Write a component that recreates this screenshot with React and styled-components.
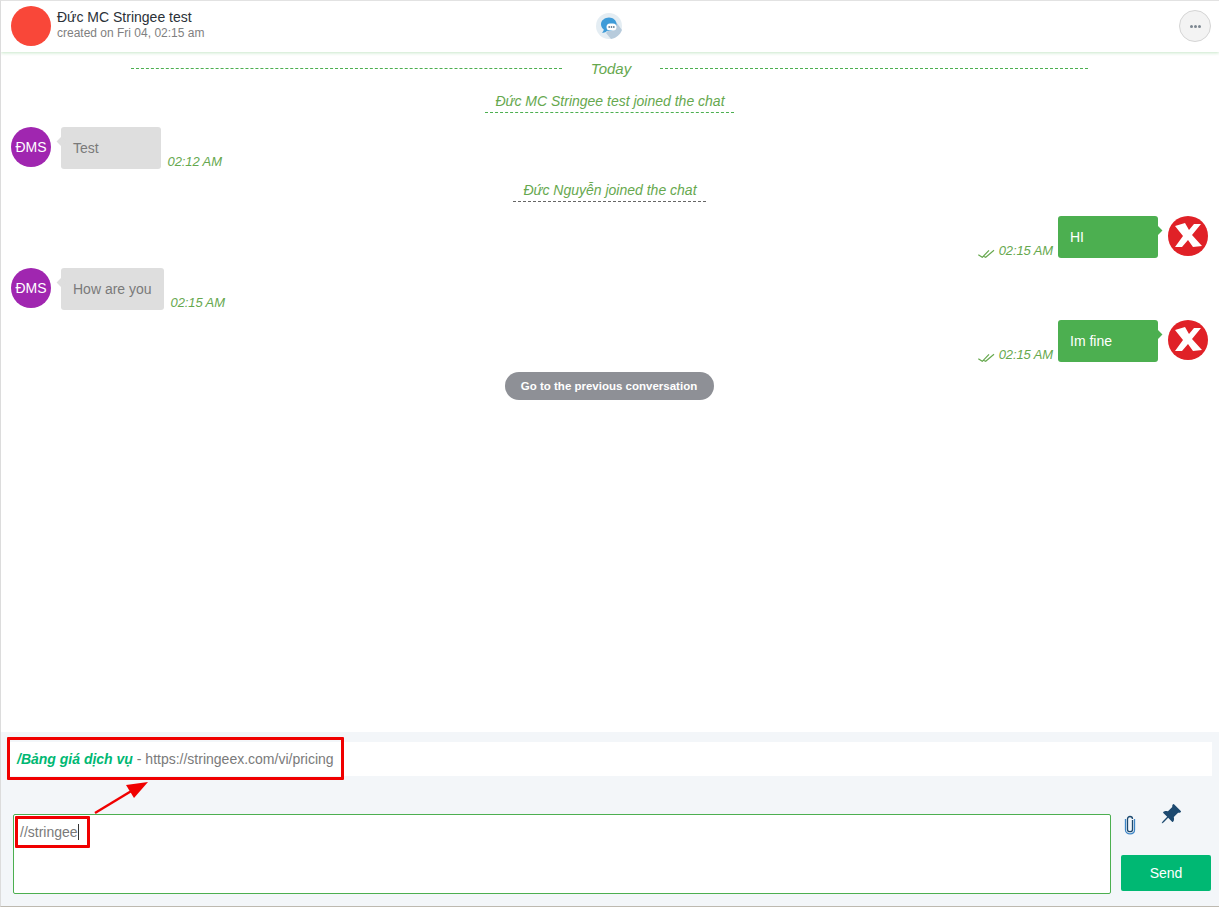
import React from 'react'
import styled, { createGlobalStyle } from 'styled-components'
import { BsPinAngleFill } from 'react-icons/bs'

const GlobalStyle = createGlobalStyle`
  html, body {
    margin: 0;
    padding: 0;
    background: #fff;
    font-family: "Liberation Sans", Arial, sans-serif;
  }
  * { box-sizing: border-box; }
`

const Page = styled.div`
  width: 1219px;
  height: 907px;
  display: flex;
  flex-direction: column;
  border-top: 1px solid #e2e2e2;
  border-left: 1px solid #dcdcdc;
  border-bottom: 1px solid #bdb9b0;
  overflow: hidden;
`

const Header = styled.header`
  height: 51px;
  flex: none;
  display: grid;
  grid-template-columns: 585px 26px 1fr;
  align-items: center;
  padding: 0 8px 1px 10px;
  background: #fff;
  box-shadow: 0 1px 3px rgba(76, 175, 80, 0.3);
  position: relative;
`

const HeaderLeft = styled.div`
  display: flex;
  align-items: center;
  gap: 6px;
`

const RoundAvatar = styled.div`
  width: 40px;
  height: 40px;
  flex: none;
  border-radius: 50%;
  background: ${(p) => p.$bg};
  color: #fff;
  font-size: 14px;
  display: flex;
  align-items: center;
  justify-content: center;
`

const HeaderText = styled.div`
  display: flex;
  flex-direction: column;
  padding-bottom: 3px;
`

const HeaderName = styled.div`
  font-size: 14px;
  line-height: 18px;
  color: #2b3138;
`

const HeaderSub = styled.div`
  font-size: 12px;
  line-height: 15px;
  color: #7f7f7f;
`

const MoreButton = styled.div`
  justify-self: end;
  width: 32px;
  height: 32px;
  border-radius: 50%;
  border: 1px solid #d5d5d5;
  background: #f3f3f3;
  display: flex;
  align-items: center;
  justify-content: center;
  gap: 1px;
`

const MoreDot = styled.span`
  width: 3px;
  height: 3px;
  border-radius: 50%;
  background: #7d8791;
`

const Chat = styled.main`
  flex: 1;
  min-height: 0;
  padding: 7px 12px 0 10px;
  display: flex;
  flex-direction: column;
`

const TodayRow = styled.div`
  display: flex;
  align-items: center;
  height: 18px;
  padding-left: 120px;
  color: #66a84e;
  font-size: 15px;
  font-style: italic;
`

const Dashes = styled.div`
  flex: ${(p) => p.$w}px 0 0;
  border-top: 1px dashed #4caf50;
`

const TodayLabel = styled.div`
  width: 98px;
  text-align: center;
`

const NoticeRow = styled.div`
  display: flex;
  justify-content: center;
  margin-top: ${(p) => p.$top}px;
`

const Notice = styled.div`
  width: ${(p) => p.$w}px;
  text-align: center;
  height: 25px;
  padding-left: 2px;
  line-height: 26px;
  font-size: 14px;
  font-style: italic;
  color: #66a84e;
  border-bottom: 1px dashed ${(p) => p.$line};
`

const MsgRow = styled.div`
  display: flex;
  align-items: flex-start;
  justify-content: ${(p) => (p.$mine ? 'flex-end' : 'flex-start')};
  margin-top: ${(p) => p.$top}px;
  margin-right: ${(p) => (p.$mine ? '-1px' : '0')};
`

const Bubble = styled.div`
  position: relative;
  width: ${(p) => p.$w}px;
  height: 42px;
  margin: ${(p) => (p.$mine ? '0 10px 0 5px' : '0 6.5px 0 10px')};
  padding: 0 12px;
  line-height: 42px;
  font-size: 14px;
  border-radius: 3px;
  background: ${(p) => (p.$mine ? '#4caf50' : '#dedede')};
  color: ${(p) => (p.$mine ? '#fff' : '#7a7a7a')};

  &::after {
    content: '';
    position: absolute;
    top: 11px;
    ${(p) => (p.$mine ? 'right: -3px;' : 'left: -3px;')}
    width: 7px;
    height: 7px;
    transform: rotate(45deg);
    background: inherit;
  }
`

const MsgTime = styled.div`
  align-self: flex-end;
  display: flex;
  gap: 4px;
  font-size: 13px;
  line-height: 15px;
  letter-spacing: -0.1px;
  font-style: italic;
  color: #66a84e;
`

const CheckMark = styled.svg`
  align-self: flex-end;
`

const PreviousRow = styled.div`
  display: flex;
  justify-content: center;
  margin-top: 10px;
`

const PreviousButton = styled.div`
  width: 209px;
  height: 28px;
  border-radius: 14px;
  background: #8e9096;
  color: #fff;
  font-size: 11.5px;
  font-weight: bold;
  line-height: 28px;
  text-align: center;
`

const Composer = styled.section`
  height: 174px;
  flex: none;
  background: #f3f6f9;
  padding: 10px 7px 0 7px;
  position: relative;
`

const Suggestion = styled.div`
  height: 34px;
  background: #fff;
  line-height: 34px;
  font-size: 14px;
  color: #7a7a7a;
  padding-left: 9px;
`

const SuggestionTitle = styled.span`
  color: #00b873;
  font-weight: bold;
  font-style: italic;
`

const InputRow = styled.div`
  display: flex;
  margin-top: 38px;
  padding-left: 5px;
`

const InputBox = styled.div`
  width: 1098px;
  height: 80px;
  flex: none;
  background: #fff;
  border: 1px solid #4caf50;
  border-radius: 2px;
  padding: 9px 6px;
  font-size: 14px;
  line-height: 17px;
  color: #7a7a7a;
`

const Caret = styled.span`
  display: inline-block;
  width: 1px;
  height: 16px;
  background: #333;
  vertical-align: -3px;
`

const InputSide = styled.div`
  margin-left: 10px;
  width: 90px;
  display: flex;
  flex-direction: column;
`

const IconRow = styled.div`
  height: 41px;
  display: flex;
  align-items: flex-start;
  color: #1d4a70;
`

const ClipIcon = styled.svg`
  flex: none;
  margin: 1px 0 0 3px;
`

const PinWrap = styled.div`
  margin: -11px 0 0 24px;
  font-size: 22px;
  line-height: 0;
`

const SendButton = styled.div`
  height: 36px;
  background: #00b873;
  border-radius: 2px;
  color: #fff;
  font-size: 14px;
  line-height: 36px;
  text-align: center;
`

/* red marks drawn on top of the screenshot */
const RedBox = styled.div`
  position: absolute;
  left: ${(p) => p.$x}px;
  top: ${(p) => p.$y}px;
  width: ${(p) => p.$w}px;
  height: ${(p) => p.$h}px;
  border: 3px solid #f00000;
  border-radius: 1px;
`

const ArrowMark = styled.svg`
  position: absolute;
  left: 90px;
  top: 47px;
`

const StringeeX = () => (
  <svg width="40" height="40" viewBox="0 0 40 40">
    <circle cx="20" cy="20" r="20" fill="#e02127" />
    <path d="M7 10l10-3 4 7 5-6h7l-9 11 10 11-9 1-5-7-6 7H7l8-11z" fill="#fff" />
  </svg>
)

const Checks = () => (
  <CheckMark width="17" height="9" viewBox="0 0 17 9">
    <path d="M.3 5.700l4 2.600L11 1.300M5.300 7.300l2.400 1L16 1.300" fill="none" stroke="#66a84e" strokeWidth="1.200" />
  </CheckMark>
)

const ChatLogo = () => (
  <svg width="26" height="26" viewBox="0 0 26 26">
    <circle cx="13" cy="13" r="13" fill="#e4edf3" />
    <path d="M10 20l5 6c5-1 9-4 11-9l-6-8z" fill="#b7cbdc" />
    <path d="M13 4.500c4 0 7.500 2.800 7.500 6.700s-3.500 6.800-7.500 6.800c-.6 0-1.200 0-1.800-.2C9.800 19.500 7.500 20 6 19.500c1-.7 1.600-1.800 1.800-3C6.100 15.200 5 13.400 5 11.200 5 7.300 9 4.500 13 4.500z" fill="#3e9bd8" />
    <rect x="10.500" y="10.500" width="10" height="7" rx="3.500" fill="#fff" />
    <path d="M12.500 14h6" stroke="#3f5f78" strokeWidth="1.400" strokeDasharray="1.400 .9" />
  </svg>
)

function App() {
  return (
    <>
      <GlobalStyle />
      <Page>
        <Header>
          <HeaderLeft>
            <RoundAvatar $bg="#f94739" />
            <HeaderText>
              <HeaderName>Đức MC Stringee test</HeaderName>
              <HeaderSub>created on Fri 04, 02:15 am</HeaderSub>
            </HeaderText>
          </HeaderLeft>
          <ChatLogo />
          <MoreButton>
            <MoreDot />
            <MoreDot />
            <MoreDot />
          </MoreButton>
        </Header>

        <Chat>
          <TodayRow>
            <Dashes $w={431} />
            <TodayLabel>Today</TodayLabel>
            <Dashes $w={428} />
          </TodayRow>
          <NoticeRow $top={11}>
            <Notice $w={249} $line="#4caf50">Đức MC Stringee test joined the chat</Notice>
          </NoticeRow>
          <MsgRow $top={14}>
            <RoundAvatar $bg="#a026b0">ĐMS</RoundAvatar>
            <Bubble $w={100}>Test</Bubble>
            <MsgTime>02:12 AM</MsgTime>
          </MsgRow>
          <NoticeRow $top={8}>
            <Notice $w={193} $line="#666">Đức Nguyễn joined the chat</Notice>
          </NoticeRow>
          <MsgRow $mine $top={14}>
            <MsgTime><Checks />02:15 AM</MsgTime>
            <Bubble $mine $w={100}>HI</Bubble>
            <StringeeX />
          </MsgRow>
          <MsgRow $top={10}>
            <RoundAvatar $bg="#a026b0">ĐMS</RoundAvatar>
            <Bubble $w={103}>How are you</Bubble>
            <MsgTime>02:15 AM</MsgTime>
          </MsgRow>
          <MsgRow $mine $top={10}>
            <MsgTime><Checks />02:15 AM</MsgTime>
            <Bubble $mine $w={100}>Im fine</Bubble>
            <StringeeX />
          </MsgRow>
          <PreviousRow>
            <PreviousButton>Go to the previous conversation</PreviousButton>
          </PreviousRow>
        </Chat>

        <Composer>
          <Suggestion>
            <SuggestionTitle>/Bảng giá dịch vụ</SuggestionTitle> - https://stringeex.com/vi/pricing
          </Suggestion>
          <InputRow>
            <InputBox>//stringee<Caret /></InputBox>
            <InputSide>
              <IconRow>
                <ClipIcon width="12" height="20" viewBox="0 0 12 20">
                  <path d="M8.500 5v9.500c0 1.300-1 2.200-2.500 2.200s-2.500-.9-2.500-2.200V4c0-1.500 1-2.500 2.500-2.500S8.500 2.500 8.500 4" fill="none" stroke="#1d4a70" strokeWidth="1.300" />
                  <path d="M10.500 4v11c0 2.300-2 3.800-4.500 3.800S1.500 17.300 1.500 15V4" fill="none" stroke="#3e86c6" strokeWidth="1.300" />
                </ClipIcon>
                <PinWrap><BsPinAngleFill /></PinWrap>
              </IconRow>
              <SendButton>Send</SendButton>
            </InputSide>
          </InputRow>
          <RedBox $x={6} $y={5} $w={337} $h={43} />
          <RedBox $x={14} $y={84} $w={75} $h={32} />
          <ArrowMark width="64" height="40" viewBox="0 0 64 40">
            <path d="M4 34L42 11" stroke="#f00000" strokeWidth="2.500" />
            <path d="M57 3L35 6l8 13z" fill="#f00000" />
          </ArrowMark>
        </Composer>
      </Page>
    </>
  )
}

export default App
